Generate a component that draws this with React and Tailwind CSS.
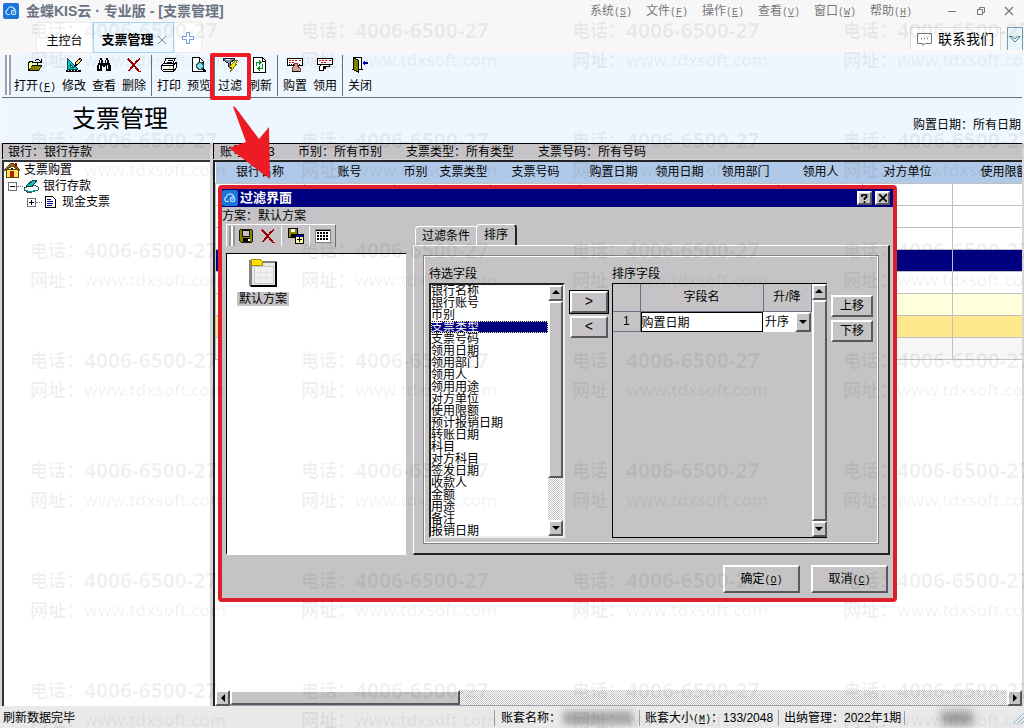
import React, { useState } from 'react';

const menus = [
  ['系统', 'S'],
  ['文件', 'F'],
  ['操作', 'E'],
  ['查看', 'V'],
  ['窗口', 'W'],
  ['帮助', 'H'],
];

const columns = [
  ['银行名称', 'w-[89px]'],
  ['账号', 'w-[90px]'],
  ['币别', 'w-[42px]'],
  ['支票类型', 'w-[54px]'],
  ['支票号码', 'w-[90px]'],
  ['购置日期', 'w-[66px]'],
  ['领用日期', 'w-[66px]'],
  ['领用部门', 'w-[66px]'],
  ['领用人', 'w-[84px]'],
  ['对方单位', 'w-[90px]'],
  ['使用限额', 'w-[104px]'],
];

const rowColors = [
  'bg-white',
  'bg-white',
  'bg-white',
  'bg-[#000080]',
  'bg-white',
  'bg-[#ffffdc]',
  'bg-[#ffe88c]',
  'bg-[#f6f6f6]',
];

const fields = [
  '银行名称', '银行账号', '币别', '支票类型', '支票号码', '领用日期', '领用部门',
  '领用人', '领用用途', '对方单位', '使用限额', '预计报销日期', '转账日期', '科目',
  '对方科目', '签发日期', '收款人', '金额', '用途', '备注', '报销日期',
];

const raised = 'bg-[#c5c3c6] border-2 border-t-white border-l-white border-b-[#5a585c] border-r-[#5a585c]';
const dither = 'bg-[repeating-conic-gradient(#c5c3c6_0_25%,#ffffff_0_50%)] bg-[length:2px_2px]';

function Icon({ children, size = 16, className = '' }) {
  return (
    <svg width={size} height={size} viewBox="0 0 16 16" fill="none" className={`shrink-0 ${className}`} shapeRendering="crispEdges">
      {children}
    </svg>
  );
}

function AppLogo() {
  return (
    <svg width="16" height="16" viewBox="0 0 16 16" fill="none" className="shrink-0">
      <rect width="16" height="16" rx="2" fill="#1b74d8" />
      <path d="M6.5 11.5H4.8a2.3 2.3 0 0 1-.4-4.5A3.6 3.6 0 0 1 11 5.6c.4.2.8.6 1 1" stroke="#c9e6ff" strokeWidth="1.2" strokeLinecap="round" />
      <circle cx="10.6" cy="9.6" r="2.2" stroke="#c9e6ff" strokeWidth="1.1" />
      <circle cx="10.6" cy="9.6" r=".7" fill="#c9e6ff" />
    </svg>
  );
}

function OpenIcon() {
  return (
    <Icon>
      <path d="M1 14V5h1V4h4v1h5v3h4v1l-3 5H1z" fill="#000" />
      <path d="M2 12V6h1V5h2v1h5v2H5v1H4v2H3v1z" fill="#ffff9c" />
      <path d="M3 13l2-4h9l-2 4z" fill="#848400" />
      <path d="M8 3.500h1M9 2.500h3M12 3.500h1M13 4.500h1M14.500 2v3M11 5.500h4" stroke="#000" />
    </Icon>
  );
}

function EditIcon() {
  return (
    <Icon>
      <path d="M1 1l10 10v1H1z" fill="#00c6c6" stroke="#004a5a" />
      <path d="M4 7v3h3z" fill="#fff" stroke="#004a5a" />
      <path d="M9 9l1-4 4-4 2 2-4 4z" fill="#ffde5a" stroke="#000" />
      <path d="M13 2l2 2" stroke="#a00000" />
      <rect y="13" width="15" height="2" fill="#000" />
      <path d="M2 13.500h1M5 13.500h1M8 13.500h1M11 13.500h1" stroke="#fff" />
    </Icon>
  );
}

function BinocularsIcon() {
  return (
    <Icon>
      <path d="M4 1h2v2h1v3h2V3h1V1h2v2h1v3h1v2h1v6h-5V9H9v1H7V9H6v5H1V8h1V6h1V3h1z" fill="#000" />
      <path d="M4 3h1v3H4zM10 3h1v3h-1zM3 8h1v4H3zM11 8h1v4h-1z" fill="#fff" />
    </Icon>
  );
}

function DeleteIcon() {
  return (
    <Icon>
      <path d="M2 2l1 1 3 3 2 2 3 4 2 2M14 2l-3 2-3 4-2 2-3 4" stroke="#9c0000" strokeWidth="1.8" />
      <path d="M1 2h2M12 14h3" stroke="#c00000" />
    </Icon>
  );
}

function PrintIcon() {
  return (
    <Icon>
      <path d="M5 1.500h9l-2 5H3z" fill="#fff" stroke="#000" />
      <path d="M6.500 3.500h5M5.500 5.500h5" stroke="#000" />
      <path d="M.5 8.500l2-2h10l3-1v5l-3 4h-10l-2-2z" fill="#fff" stroke="#000" />
      <path d="M1 8.500h11l3-3M12.500 9v5M2 12.500h10" stroke="#000" />
      <rect x="8" y="10" width="2" height="1" fill="#ded600" />
    </Icon>
  );
}

function PreviewIcon() {
  return (
    <Icon>
      <path d="M1.500.500h7l4 4v10h-11z" fill="#fff" stroke="#000" />
      <path d="M8.500 1v4h4" stroke="#000" />
      <circle cx="9" cy="9" r="3.5" fill="#7de6f0" stroke="#31525a" strokeWidth="1.4" />
      <path d="M12 12l3 3" stroke="#000" strokeWidth="2" />
    </Icon>
  );
}

function FilterIcon() {
  return (
    <Icon>
      <path d="M1 1h11v2L8 6v5l-2-2V6L1 3z" fill="#7b8ca5" stroke="#10182a" />
      <path d="M4 2h4" stroke="#fff" />
      <path d="M13 3h3l-3 4h2l-7 8 2-5H7l4-4z" fill="#ffe600" stroke="#52520a" strokeWidth=".8" />
    </Icon>
  );
}

function RefreshIcon() {
  return (
    <Icon>
      <path d="M1.500.500h9l3 3v12h-12z" fill="#fff" stroke="#000" />
      <path d="M10.500 1v3h3" stroke="#000" />
      <path d="M4.500 9V5.500H7M10.500 7v4.500H8" stroke="#009c21" strokeWidth="1.4" />
      <path d="M7 3v5l3-2.500zM8 9v5l-3-2.500z" fill="#009c21" />
    </Icon>
  );
}

function BuyIcon() {
  return (
    <Icon>
      <path d="M.5 1.500h15v7H.5z" fill="#fff" stroke="#000" />
      <path d="M2 3.500h9M2 5.500h6M12 3.500h2" stroke="#c01818" strokeDasharray="2 1" />
      <path d="M2 7.500h12" stroke="#000" strokeDasharray="1 1" />
      <path d="M7 6h3v3l3 2v3H5v-3l2-2z" fill="#c6a59c" stroke="#8c3a31" />
      <path d="M5 14.500h8" stroke="#000" />
    </Icon>
  );
}

function UseIcon() {
  return (
    <Icon>
      <path d="M.5 1.500h15v6H.5z" fill="#fff" stroke="#000" />
      <path d="M2 3.500h9M4 5.500h6M12 3.500h2" stroke="#c01818" strokeDasharray="2 1" />
      <path d="M2.500 13.500v-4l2-2h8v2h-6v1h2v1h-2v2z" fill="#fff" stroke="#000" />
    </Icon>
  );
}

function ExitIcon() {
  return (
    <Icon>
      <path d="M1.500.500h8v12h-8z" fill="#fff" stroke="#000" />
      <path d="M1.500.500l5 3v12l-5-3z" fill="#848400" stroke="#000" />
      <path d="M0 12.500h2M7 12.500h4" stroke="#000" />
      <path d="M10 6l3-3v2h3v2h-3v2z" fill="#0000a0" />
    </Icon>
  );
}

function SaveIcon({ size = 16 }) {
  return (
    <Icon size={size}>
      <path d="M1 1h14v14H2l-1-1z" fill="#848400" stroke="#000" />
      <rect x="4" y="2" width="8" height="6" fill="#c6c3c6" stroke="#000" />
      <path d="M4 10h9v5H4z" fill="#000" />
      <rect x="10" y="11" width="2" height="3" fill="#fff" />
    </Icon>
  );
}

function SaveAsIcon() {
  return (
    <Icon>
      <path d="M.5.5h9v9h-9z" fill="#848400" stroke="#000" />
      <rect x="3" y="1" width="4" height="3" fill="#fff" />
      <rect x="3" y="6" width="5" height="3" fill="#000" />
      <path d="M7.5 6.5h8v9h-8z" fill="#ffff9c" stroke="#000" />
      <path d="M8 7.5h7" stroke="#0000a0" strokeWidth="2" />
      <path d="M11.5 9v5M9 11.5h5" stroke="#000" />
    </Icon>
  );
}

function GridIcon() {
  return (
    <Icon>
      <path d="M.5 1.5h15v13H.5z" fill="#fff" stroke="#848484" />
      <path d="M1 2.5h14" stroke="#000" />
      <path d="M2 5h12M2 8h12M2 11h12" stroke="#000" strokeWidth="2" strokeDasharray="2 1" />
    </Icon>
  );
}

function HouseIcon() {
  return (
    <Icon>
      <path d="M2 7h12v8H2z" fill="#ffe94a" stroke="#5a4a00" />
      <path d="M0 8l7-7h2l7 7h-2L8 4 2 8z" fill="#8c6b10" stroke="#2a2000" strokeWidth=".7" />
      <rect x="11" y="1" width="2" height="4" fill="#a00000" />
      <rect x="6" y="9" width="4" height="6" fill="#c01818" />
      <rect x="7" y="6" width="2" height="2" fill="#2a2000" />
    </Icon>
  );
}

function BankIcon() {
  return (
    <Icon>
      <path d="M1 10l10-3 4 2v3l-9 3-5-3z" fill="#fff" stroke="#31525a" />
      <path d="M3 8l7-6h4l-5 7z" fill="#18b5ad" stroke="#084a4a" />
      <path d="M2 12l5 2 7-2" stroke="#108c8c" />
    </Icon>
  );
}

function DocIcon() {
  return (
    <Icon>
      <path d="M3.500 2.500h7l3 3v8h-10z" fill="#fff" stroke="#000" />
      <path d="M5 5.500h4M5 7.500h6M5 9.500h6M5 11.500h5" stroke="#00007b" />
    </Icon>
  );
}

function FolderIcon() {
  return (
    <svg width="30" height="30" viewBox="0 0 30 30" shapeRendering="crispEdges">
      <path d="M1 2h2v26H1z" fill="#848284" />
      <path d="M3 4h25v24H3z" fill="#e8e8e8" stroke="#848284" strokeWidth="2" />
      <path d="M27 4h2v25H3v-2h24z" fill="#000" />
      <path d="M6 8h19v17H6z" fill="#f0f0f0" stroke="#c8c8c8" />
      <path d="M6 14h19M6 19h19M12 8v17M18 8v17" stroke="#e2e2e2" />
      <path d="M3 1h9l2 2v4H3z" fill="#ffde00" stroke="#a58c00" />
    </svg>
  );
}

function Arrow({ dir }) {
  const paths = {
    up: 'M4 1L0 5h8z',
    down: 'M0 2h8L4 6z',
    left: 'M2 4l4-4v8z',
    right: 'M6 4L2 0v8z',
  };
  return (
    <svg width="8" height="8" viewBox="0 0 8 8" className="shrink-0">
      <path d={paths[dir]} fill="#000" />
    </svg>
  );
}

// menu mnemonic, e.g. (F) with the letter underlined
function Key({ k }) {
  return (
    <span className="font-['Liberation_Mono'] text-[10px]">
      (<u>{k}</u>)
    </span>
  );
}

function ToolButton({ icon, label, k }) {
  return (
    <button className={`flex flex-col items-center gap-[5px] pt-[3px] whitespace-nowrap ${k ? 'w-12' : 'w-[30px]'}`}>
      {icon}
      <span className="leading-4">{label}{k && <Key k={k} />}</span>
    </button>
  );
}

function Separator({ className = 'w-[5px]' }) {
  return (
    <div className={`flex justify-center self-stretch py-px ${className}`}>
      <div className="w-px bg-gray-500" />
    </div>
  );
}

function ScrollButton({ dir }) {
  return (
    <button aria-label={dir} className={`w-[15px] h-4 shrink-0 flex items-center justify-center ${raised}`}>
      <Arrow dir={dir} />
    </button>
  );
}

function TitleBar() {
  return (
    <div className="h-[22px] flex items-center pl-[3px] pr-2.5 text-[#777]">
      <AppLogo />
      <h1 className="ml-[7px] text-sm font-bold text-gray-500 whitespace-nowrap">金蝶KIS云 · 专业版 - [支票管理]</h1>
      <nav className="ml-auto flex gap-3.5">
        {menus.map(([label, k]) => (
          <button key={k} className="w-[42px] whitespace-nowrap">{label}<Key k={k} /></button>
        ))}
      </nav>
      <div className="ml-9 flex items-center gap-[18px]">
        <button aria-label="最小化" className="w-2.5 h-2.5 flex items-center"><span className="w-2 h-px bg-[#777]" /></button>
        <button aria-label="还原">
          <svg width="10" height="10" viewBox="0 0 10 10" fill="none" stroke="#777"><path d="M1.500 3.500h5v5h-5zM3.500 3V1.500h5v5H7" /></svg>
        </button>
        <button aria-label="关闭">
          <svg width="10" height="10" viewBox="0 0 10 10" stroke="#777" strokeWidth="1.2"><path d="M1 1l8 8M9 1L1 9" /></svg>
        </button>
      </div>
    </div>
  );
}

function TabRow() {
  return (
    <div className="h-8 flex items-stretch pl-9 pr-px">
      <button className="w-[57px] mb-px bg-white border border-[#ececec] pt-1.5">主控台</button>
      <div className="w-[81px] mb-px flex items-center justify-center gap-1 bg-[#f0f8ff] border border-[#a9d3f5] pt-1">
        <button className="text-[13px] font-bold">支票管理</button>
        <button aria-label="关闭标签">
          <svg width="8" height="8" viewBox="0 0 8 8" stroke="#888"><path d="M0 0l8 8M8 0L0 8" /></svg>
        </button>
      </div>
      <button aria-label="新建标签" className="w-7 mb-px bg-white border border-[#ececec] flex items-center justify-center">
        <svg width="12" height="12" viewBox="0 0 12 12" fill="#fff" stroke="#6f9fd8"><path d="M4.500.5h3v4h4v3h-4v4h-3v-4h-4v-3h4z" /></svg>
      </button>
      <button className="ml-auto mt-[5px] mb-1 w-[91px] flex items-center justify-center gap-1.5 bg-white border border-b-0 border-[#dadada] text-sm">
        <svg width="15" height="13" viewBox="0 0 15 13" fill="none" stroke="#777"><path d="M.5.500h14v10H8l-2 2v-2H.5z" /><path d="M4 5.500h1M7 5.500h1M10 5.500h1" strokeWidth="1.4" /></svg>
        联系我们
      </button>
      <button aria-label="更多" className="ml-1.5 mt-[5px] mb-1 w-4 flex items-center justify-center bg-[#eaf6fa] border border-b-0 border-[#6f9fb0]">
        <svg width="12" height="8" viewBox="0 0 12 8" fill="#fff" stroke="#3d8296" className="shrink-0"><path d="M.8 1.500h2.400L6 4l2.800-2.500h2.400L6 7z" /></svg>
      </button>
    </div>
  );
}

function Toolbar() {
  return (
    <div className="h-11 flex items-start bg-[#eef7ff] border-b border-gray-500 mx-0.5 pl-[3px]">
      <div className="w-1.5 h-10 mt-px border-x-2 border-gray-400 bg-white" />
      <ToolButton icon={<OpenIcon />} label="打开" k="F" />
      <ToolButton icon={<EditIcon />} label="修改" />
      <ToolButton icon={<BinocularsIcon />} label="查看" />
      <ToolButton icon={<DeleteIcon />} label="删除" />
      <Separator />
      <ToolButton icon={<PrintIcon />} label="打印" />
      <ToolButton icon={<PreviewIcon />} label="预览" />
      <Separator className="w-px" />
      <ToolButton icon={<FilterIcon />} label="过滤" />
      <ToolButton icon={<RefreshIcon />} label="刷新" />
      <Separator />
      <ToolButton icon={<BuyIcon />} label="购置" />
      <ToolButton icon={<UseIcon />} label="领用" />
      <Separator />
      <ToolButton icon={<ExitIcon />} label="关闭" />
    </div>
  );
}

function SideTree() {
  return (
    <aside className="w-[208px] shrink-0 flex flex-col">
      <div className="h-4 bg-[#c5c3c6] border-t border-l border-black pl-[5px]">银行：银行存款</div>
      <ul className="flex-1 mt-px bg-white border-t-2 border-l-2 border-[#333] leading-4">
        <li className="flex items-center gap-1"><HouseIcon />支票购置</li>
        <li className="flex items-center pl-1">
          <button aria-label="折叠" className="w-[9px] h-[9px] border border-gray-500 bg-white flex items-center justify-center"><span className="w-[5px] h-px bg-black" /></button>
          <span className="w-1.5 border-t border-dotted border-gray-500" />
          <BankIcon /><span className="ml-1">银行存款</span>
        </li>
        <li className="flex items-center pl-[23px]">
          <button aria-label="展开" className="w-[9px] h-[9px] border border-gray-500 bg-white flex items-center justify-center">
            <svg width="5" height="5" viewBox="0 0 5 5" stroke="#000"><path d="M0 2.500h5M2.500 0v5" /></svg>
          </button>
          <span className="w-1.5 border-t border-dotted border-gray-500" />
          <DocIcon /><span className="ml-1">现金支票</span>
        </li>
      </ul>
    </aside>
  );
}

function DataGrid() {
  return (
    <section className="flex-1 min-w-0 flex flex-col">
      <div className="h-4 flex bg-[#c5c3c6] border-t border-l border-black pl-1.5 whitespace-nowrap">
        <span className="w-[78px] flex gap-3"><span>账号：</span><span>3</span></span>
        <span className="w-[108px]">币别：所有币别</span>
        <span className="w-[132px]">支票类型：所有类型</span>
        <span>支票号码：所有号码</span>
      </div>
      <div className="flex-1 mt-px min-h-0 flex flex-col bg-white border-t-2 border-l-2 border-[#222]">
        <div className="flex-1 overflow-hidden">
          <table className="table-fixed w-[841px] border-collapse">
            <thead>
              <tr className="h-[21px] bg-[#b0c9e8]">
                {columns.map(([name, width]) => (
                  <th key={name} className={`p-0 font-normal whitespace-nowrap ${width}`}>{name}</th>
                ))}
              </tr>
            </thead>
            <tbody>
              {rowColors.map((color, i) => (
                <tr key={i} className={`h-[22px] ${color}`}>
                  {columns.map(([name]) => (
                    <td key={name} className="p-0 border border-[#c0c0c0]"></td>
                  ))}
                </tr>
              ))}
            </tbody>
          </table>
        </div>
        <div className={`h-4 flex border-b border-gray-400 ${dither}`}>
          <ScrollButton dir="left" />
          <div className={`w-[230px] ${raised}`} />
          <div className="ml-auto flex"><ScrollButton dir="right" /></div>
        </div>
      </div>
    </section>
  );
}

function StatusBar() {
  return (
    <footer className="h-[22px] flex items-center bg-[#e9e9e9] pl-[3px] pt-0.5 whitespace-nowrap">
      <span>刷新数据完毕</span>
      <div className="ml-auto w-[145px] flex items-center border-l border-gray-400 pl-1.5">
        账套名称：<span className="ml-0.5 w-[70px] h-3.5 bg-[#a9a9a9] blur-[3px]" />
      </div>
      <div className="w-[139px] border-l border-gray-400 pl-[5px]">账套大小<Key k="M" />：133/2048</div>
      <div className="w-[126px] border-l border-gray-400 pl-[5px]">出纳管理：2022年1期</div>
      <div className="w-[120px] border-l border-gray-400 flex items-center pl-9">
        <span className="w-8 h-3.5 bg-[#999] blur-[4px]" />
        <svg width="12" height="14" viewBox="0 0 12 14" stroke="#8fb4cc" className="ml-auto"><path d="M1 13L12 2M5 13l7-7M9 13l3-3" /></svg>
      </div>
    </footer>
  );
}

function FieldList() {
  const [selected, setSelected] = useState('支票类型');
  return (
    <div className="w-[136px] h-[255px] flex bg-white border-2 border-t-[#222] border-l-[#222] border-b-[#eee] border-r-[#eee]">
      <ul role="listbox" aria-labelledby="pending" className="flex-1 overflow-hidden">
        {fields.map((f) => (
          <li
            key={f}
            role="option"
            aria-selected={f === selected}
            onClick={() => setSelected(f)}
            className={`h-3 leading-3 cursor-default ${f === selected ? 'bg-[#000080] text-white outline-1 -outline-offset-1 outline-dotted outline-yellow-200' : ''}`}
          >
            {f}
          </li>
        ))}
      </ul>
      <div className={`w-[15px] flex flex-col ${dither}`}>
        <ScrollButton dir="up" />
        <div className={`h-[177px] ${raised}`} />
        <div className="mt-auto"><ScrollButton dir="down" /></div>
      </div>
    </div>
  );
}

function SortTable() {
  return (
    <div className="w-[215px] h-[255px] flex border border-black">
      <div className="flex-1">
        <table className="table-fixed w-[198px] border-collapse">
          <thead>
            <tr className="h-[27px]">
              <th className="p-0 w-[27px] border-r border-b border-gray-500"></th>
              <th className="p-0 w-[123px] border-r border-b border-gray-500 font-normal">字段名</th>
              <th className="p-0 w-12 border-r border-b border-gray-500 font-normal">升/降</th>
            </tr>
          </thead>
          <tbody>
            <tr className="h-[20px]">
              <td className="p-0 text-center border-r border-b border-gray-500">1</td>
              <td className="p-0">
                <input aria-label="字段名" defaultValue="购置日期" className="block w-full h-5 bg-white border border-black" />
              </td>
              <td className="p-0">
                <div className="relative">
                  <select aria-label="升/降" className="block w-full h-5 appearance-none bg-white pl-0.5 pr-4">
                    <option>升序</option>
                    <option>降序</option>
                  </select>
                  <span className={`absolute right-0 top-0 w-4 h-5 flex items-center justify-center pointer-events-none ${raised}`}><Arrow dir="down" /></span>
                </div>
              </td>
            </tr>
          </tbody>
        </table>
      </div>
      <div className="w-[15px] flex flex-col">
        <ScrollButton dir="up" />
        <div className={`flex-1 ${raised}`} />
        <ScrollButton dir="down" />
      </div>
    </div>
  );
}

function FilterDialog() {
  return (
    <div role="dialog" aria-label="过滤界面" className="absolute left-[218px] top-[185px] w-[679px] bg-[#c5c3c6] border-4 border-[#dc1f2b] rounded-sm">
      <div className="h-[18px] flex items-center bg-[#000080] pr-[3px]">
        <AppLogo />
        <h2 className="ml-0.5 text-[13px] font-bold text-white">过滤界面</h2>
        <div className="ml-auto flex gap-[3px]">
          <button aria-label="帮助" className={`w-[15px] h-3.5 flex items-center justify-center ${raised}`}>
            <svg width="7" height="9" viewBox="0 0 7 9" fill="none" stroke="#000" strokeWidth="1.7" className="shrink-0"><path d="M1 3V1h4.500v2L3.500 4.500V6M3.500 7.200V9" /></svg>
          </button>
          <button aria-label="关闭" className={`w-[15px] h-3.5 flex items-center justify-center ${raised}`}>
            <svg width="8" height="8" viewBox="0 0 8 8" stroke="#000" strokeWidth="1.7" className="shrink-0"><path d="M0 0l8 8M8 0L0 8" /></svg>
          </button>
        </div>
      </div>
      <p className="h-[17px] leading-[18px]">方案：默认方案</p>

      <div className="flex pl-1 pr-[3px] gap-[7px]">
        <div className="w-[180px] shrink-0 flex flex-col gap-1.5">
          <div className="w-[110px] h-[23px] flex items-center border-t border-l border-t-white border-l-white border-r border-r-gray-500 pl-0.5">
            <div className="w-1.5 h-5 border-x-2 border-x-[#99979a] bg-white" />
            <button aria-label="保存" className="w-[22px] flex justify-center"><SaveIcon size={14} /></button>
            <button aria-label="删除" className="w-[22px] flex justify-center"><DeleteIcon /></button>
            <span className="w-px h-5 bg-white mx-0.5" />
            <button aria-label="另存为" className="w-[23px] flex justify-center"><SaveAsIcon /></button>
            <span className="w-px h-5 bg-white mx-0.5" />
            <button aria-label="列表" className="w-[22px] flex justify-center"><GridIcon /></button>
          </div>
          <div className="flex-1 bg-white border-t border-l border-black border-b-2 border-b-white pt-1 pl-2.5">
            <button className="w-[52px] flex flex-col items-center gap-1">
              <FolderIcon />
              <span className="w-full bg-[#c5c3c6] leading-[14px]">默认方案</span>
            </button>
          </div>
        </div>

        <div className="flex-1">
          <div role="tablist" className="flex items-end h-[21px] pl-0.5">
            <button role="tab" aria-selected="false" className="w-[61px] h-[19px] border-t border-l border-white rounded-tl-sm">过滤条件</button>
            <button role="tab" aria-selected="true" className="w-[41px] h-[21px] border-t border-l border-white border-r-2 border-r-[#222] rounded-t-sm">排序</button>
          </div>
          <div className="border border-t-white border-l-white border-b-2 border-r-2 border-b-[#222] border-r-[#222] p-[9px]">
            <div className="border border-[#848284] outline-1 outline-white -outline-offset-2 pl-[5px] pt-2.5 pb-[5px] flex">
              <div>
                <label id="pending" className="block leading-4 mb-px">待选字段</label>
                <FieldList />
              </div>
              <div className="w-[38px] ml-[5px] mr-1 mt-[25px] flex flex-col gap-[3px]">
                <button className={`h-[22px] leading-4 text-sm outline-1 outline-black font-['Liberation_Mono'] ${raised}`}>&gt;</button>
                <button className={`h-[22px] leading-4 text-sm font-['Liberation_Mono'] ${raised}`}>&lt;</button>
              </div>
              <div>
                <div className="leading-4 mb-px">排序字段</div>
                <SortTable />
              </div>
              <div className="w-[42px] ml-1 mt-[29px] flex flex-col gap-[3px]">
                <button className={`h-[22px] leading-4 ${raised}`}>上移</button>
                <button className={`h-[22px] leading-4 ${raised}`}>下移</button>
              </div>
            </div>
          </div>
        </div>
      </div>

      <div className="flex justify-end gap-[11px] pt-2.5 pb-[5px] pr-[5px]">
        <button className={`w-[77px] h-7 ${raised}`}>确定<Key k="O" /></button>
        <button className={`w-[77px] h-7 ${raised}`}>取消<Key k="C" /></button>
      </div>
    </div>
  );
}

// highlight box on the filter button and the arrow down to its dialog
function Callout() {
  return (
    <>
      <div className="absolute left-[210px] top-[53px] w-[41px] h-[47px] border-4 border-[#ed1c24] rounded-xs pointer-events-none" />
      <svg width="44" height="76" viewBox="0 0 44 76" className="absolute left-[228px] top-[105px] pointer-events-none">
        <path d="M5 1.500Q6 1 7.500 2.500L31 34l10-12 1 52L1 43l17-6z" fill="#ed1c24" />
      </svg>
    </>
  );
}

function Watermark() {
  return (
    <div aria-hidden="true" className="absolute inset-0 overflow-hidden pointer-events-none pl-[30px] pt-[15px] text-black/6 font-['Noto_Sans','Noto_Sans_CJK_SC',sans-serif]">
      <div className="w-[1084px] grid grid-cols-4 auto-rows-[110px]">
        {Array.from({ length: 28 }, (_, i) => (
          <div key={i} className="text-lg font-bold leading-[30px] whitespace-nowrap">
            <div className="flex h-[30px]"><span className="w-[54px]">电话：</span><span className="text-[21px]">4006-6500-27</span></div>
            <div className="flex h-[30px]"><span className="w-[54px]">网址：</span><span className="text-[17px] font-medium">www.tdxsoft.com</span></div>
          </div>
        ))}
      </div>
    </div>
  );
}

function App() {
  return (
    <div className="relative h-screen flex flex-col overflow-hidden bg-[#f7f7f7] text-black text-xs font-['Liberation_Sans','Noto_Sans_CJK_SC',sans-serif]">
      <TitleBar />
      <TabRow />
      <Toolbar />
      <div className="h-[45px] flex items-center justify-between bg-[#eef7ff] mx-0.5 pl-[70px] pr-px">
        <h2 className="text-2xl leading-8 pb-1">支票管理</h2>
        <span className="mt-2">购置日期：所有日期</span>
      </div>
      <main className="flex-1 min-h-0 flex gap-[3px] bg-[#d6d5d8] px-0.5">
        <SideTree />
        <DataGrid />
      </main>
      <StatusBar />
      <FilterDialog />
      <Callout />
      <Watermark />
    </div>
  );
}

export default App;
